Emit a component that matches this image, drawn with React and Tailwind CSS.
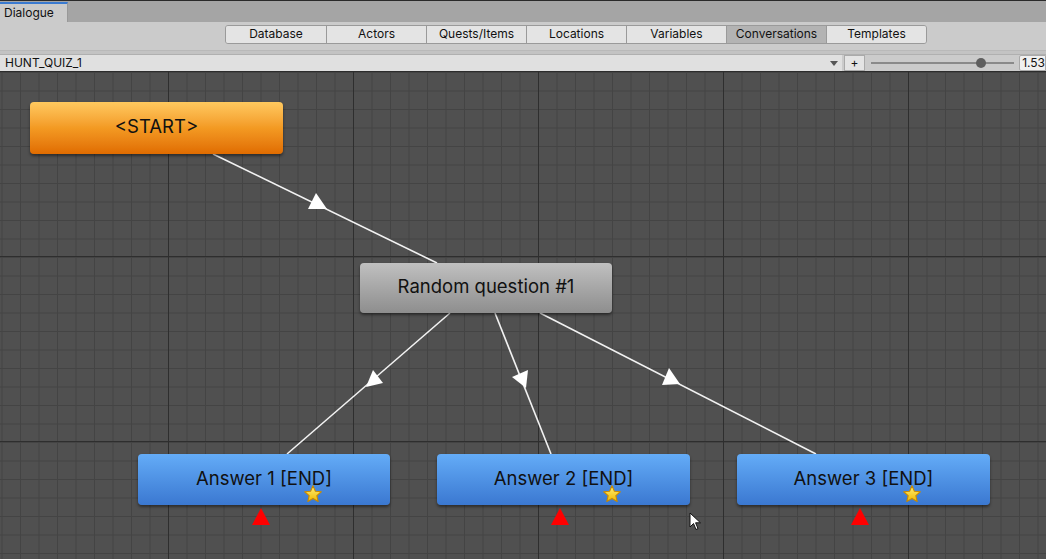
import React from "react";

const FONT = { fontFamily: "Inter, 'Noto Sans', 'Liberation Sans', sans-serif" };

const tabs = ["Database", "Actors", "Quests/Items", "Locations", "Variables", "Conversations", "Templates"];

function Star({ x, y }) {
  return (
    <svg className="absolute" style={{ left: x - 10, top: y - 10 }} width="20" height="20" viewBox="0 0 24 24">
      <defs>
        <linearGradient id="sg" x1="0" y1="0" x2="0" y2="1">
          <stop offset="0" stopColor="#fff27a" />
          <stop offset="1" stopColor="#f0b800" />
        </linearGradient>
      </defs>
      <path d="M12 2 L14.9 8.6 L22 9.3 L16.6 14 L18.2 21 L12 17.3 L5.8 21 L7.4 14 L2 9.3 L9.1 8.6 Z" fill="url(#sg)" stroke="#c98a00" strokeWidth="1.3" strokeLinejoin="round" />
    </svg>
  );
}

function Node({ x, y, w, h, text, kind, star, pin }) {
  const bg =
    kind === "start"
      ? "bg-gradient-to-b from-[#ffc95e] via-[#f39a22] to-[#e06c00]"
      : kind === "gray"
      ? "bg-gradient-to-b from-[#c0c0c0] to-[#8e8e8e]"
      : "bg-gradient-to-b from-[#64acf7] to-[#3b78d1]";
  return (
    <>
      <div
        className={`absolute flex items-center justify-center rounded-[4px] shadow-[0_2px_3px_rgba(0,0,0,0.45)] ${bg} text-[18.5px] text-[#111]`}
        style={{ left: x, top: y, width: w, height: h, ...FONT }}
      >
        <span className="-mt-[2px]">{text}</span>
      </div>
      {star && <Star x={star[0]} y={star[1]} />}
      {pin && (
        <svg className="absolute" style={{ left: pin - 9, top: y + h + 3 }} width="18" height="17" viewBox="0 0 18 17">
          <polygon points="9,0 18,17 0,17" fill="#ff0000" />
        </svg>
      )}
    </>
  );
}

export default function App() {
  return (
    <div className="w-[1046px] h-[559px] overflow-hidden flex flex-col bg-[#4f4f4f] select-none" style={FONT}>
      {/* window tab strip */}
      <div className="h-[22px] bg-[#a5a5a5] border-t border-[#2a2a2a] flex items-end">
        <div className="h-[20px] w-[68px] bg-[#cbcbcb] border-t-2 border-[#3a7ad0] border-r border-r-[#999] flex items-center pl-[4px] text-[12px] text-[#111]">
          Dialogue
        </div>
      </div>
      {/* toolbar */}
      <div className="h-[49px] bg-[#cbcbcb] flex flex-col">
        <div className="h-[24px] flex items-center pl-[225px] pt-[1px]">
          <div className="flex h-[19px] rounded-[3px] border border-[#9a9a9a] overflow-hidden">
            {tabs.map((t, i) => (
              <div
                key={t}
                className={`w-[100px] flex items-center justify-center text-[12px] text-[#111] ${i > 0 ? "border-l border-[#9a9a9a]" : ""} ${t === "Conversations" ? "bg-[#b3b3b3]" : "bg-[#e4e4e4]"}`}
              >
                {t}
              </div>
            ))}
          </div>
        </div>
        <div className="h-[6px] border-b border-[#b9b9b9]" />
        <div className="h-[4px] bg-[#c3c3c3] border-b border-[#b0b0b0]" />
        <div className="flex-1 flex items-center bg-[#cbcbcb]">
          <div className="w-[847px] h-[16px] bg-[#e0e0e0] flex items-center pl-[5px] text-[12px] text-[#111] relative">
            HUNT_QUIZ_1
            <svg className="absolute right-[3px] top-[5px]" width="10" height="7" viewBox="0 0 10 7">
              <polygon points="1,1 9,1 5,6" fill="#555" />
            </svg>
          </div>
          <div className="ml-[2px] w-[21px] h-[16px] bg-[#e4e4e4] border border-[#aaa] flex items-center justify-center text-[12px] text-[#111] leading-none">
            +
          </div>
          <div className="ml-[6px] w-[144px] h-[16px] relative flex items-center">
            <div className="w-full h-[2px] bg-[#8a8a8a]" />
            <div className="absolute left-[105px] top-[3px] w-[10px] h-[10px] rounded-full bg-[#5f5f5f]" />
          </div>
          <div className="ml-[5px] flex-1 h-[16px] bg-[#f0f0f0] border border-[#aaa] rounded-l-[2px] flex items-center pl-[2px] text-[12px] text-[#111]">
            1.53
          </div>
        </div>
      </div>
      {/* canvas */}
      <div className="relative flex-1 bg-[#505050] border-t border-[#2c2c2c]">
        <svg className="absolute inset-0" width="1046" height="488">
          <defs>
            <pattern id="minor" x="1.5" y="0" width="18.5" height="18.5" patternUnits="userSpaceOnUse">
              <rect x="0" y="0" width="1" height="18.5" fill="#444444" />
              <rect x="0" y="0" width="18.5" height="1" fill="#444444" />
            </pattern>
            <pattern id="major" x="168" y="-1" width="185" height="185" patternUnits="userSpaceOnUse">
              <rect x="0" y="0" width="1" height="185" fill="#2e2e2e" />
              <rect x="0" y="0" width="185" height="1" fill="#2e2e2e" />
            </pattern>
          </defs>
          <rect width="1046" height="488" fill="url(#minor)" />
          <rect width="1046" height="488" fill="url(#major)" />
          <g stroke="#f2f2f2" strokeWidth="1.6" fill="none">
            <line x1="213" y1="82" x2="437" y2="191" />
            <line x1="450" y1="241" x2="287" y2="382" />
            <line x1="495" y1="241" x2="551" y2="382" />
            <line x1="540" y1="241" x2="816" y2="382" />
          </g>
          <g fill="#ffffff">
            <polygon points="316,121 308,137 327,137" />
            <polygon points="373,298 366,315 383,311" />
            <polygon points="512,305 528,298 526,316" />
            <polygon points="669,296 662,313 680,312" />
          </g>
        </svg>
        <Node x={30} y={30} w={253} h={52} text="<START>" kind="start" />
        <Node x={360} y={191} w={252} h={50} text="Random question #1" kind="gray" />
        <Node x={138} y={382} w={252} h={51} text="Answer 1 [END]" kind="blue" star={[313, 422]} pin={261} />
        <Node x={437} y={382} w={253} h={51} text="Answer 2 [END]" kind="blue" star={[612, 422]} pin={560} />
        <Node x={737} y={382} w={253} h={51} text="Answer 3 [END]" kind="blue" star={[912, 422]} pin={860} />
        <svg className="absolute" style={{ left: 689, top: 440 }} width="13" height="19" viewBox="0 0 13 19">
          <path d="M1 1 L1 15 L4.5 11.5 L7 17.5 L9 16.6 L6.6 10.8 L11.5 10.8 Z" fill="#fff" stroke="#111" strokeWidth="1" strokeLinejoin="round" />
        </svg>
      </div>
    </div>
  );
}
